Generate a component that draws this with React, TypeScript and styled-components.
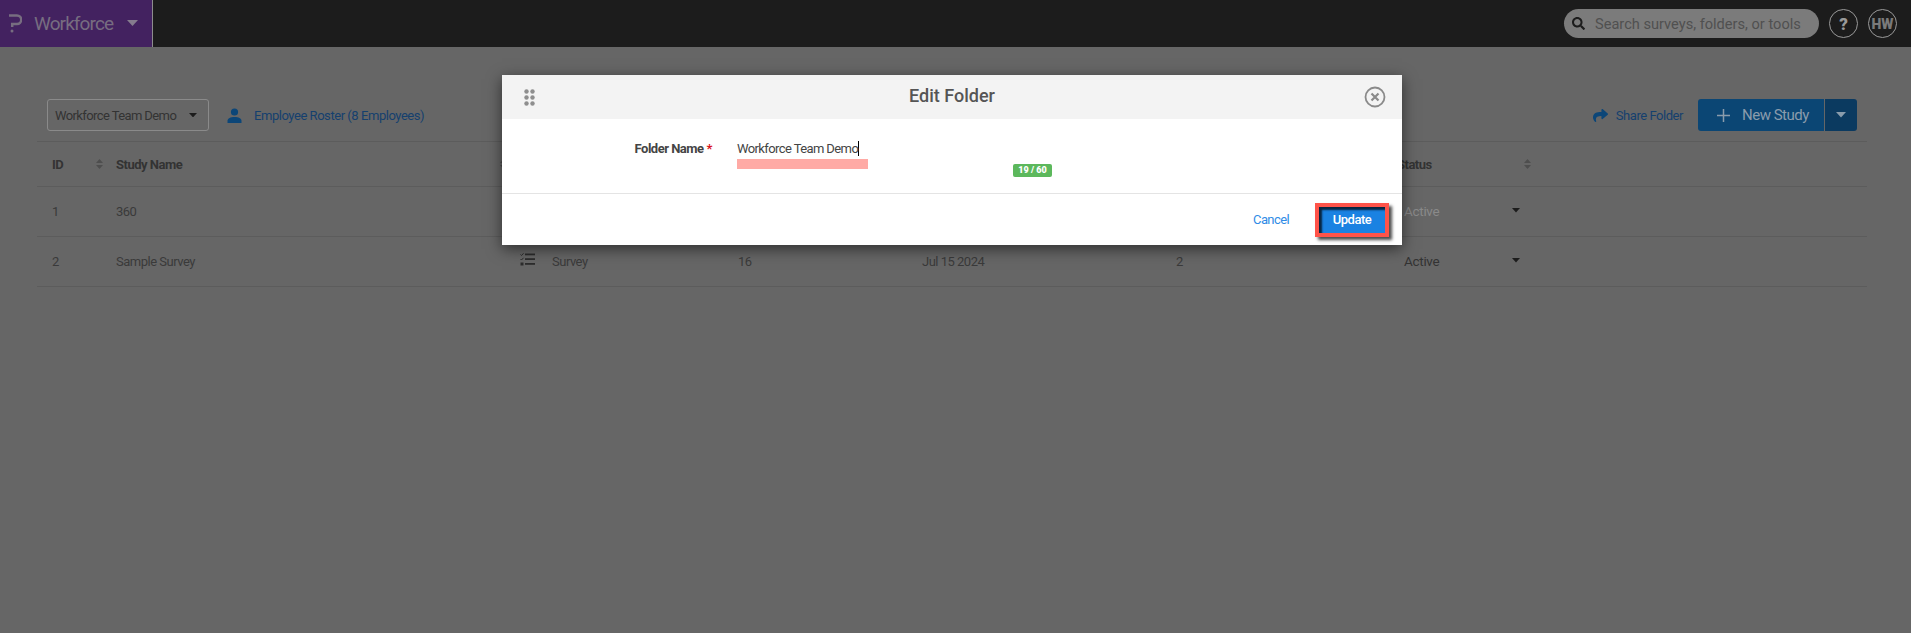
import React from 'react';
import styled, { createGlobalStyle } from 'styled-components';
import { FaSearch, FaShare } from 'react-icons/fa';

const FONT = `'Roboto', 'Liberation Sans', sans-serif`;

const GlobalStyle = createGlobalStyle`
  html, body {
    margin: 0;
    padding: 0;
    background: #666666;
    font-family: ${FONT};
  }
  * { box-sizing: border-box; }
`;

const Page = styled.div`
  position: relative;
  width: 1911px;
  height: 633px;
  overflow: hidden;
  background: #666666;
`;

const TopBar = styled.header`
  display: flex;
  align-items: center;
  height: 47px;
  background: #1c1c1c;
  padding-right: 14px;
`;

const Brand = styled.div`
  display: flex;
  align-items: center;
  width: 153px;
  height: 47px;
  padding-left: 9px;
  background: #432260;
  border-right: 1px solid #8d8d8d;
  color: #776d80;
  font-size: 19px;
  letter-spacing: -0.9px;
`;

const BrandName = styled.span`
  margin-left: 12px;
  margin-right: 14px;
`;

const Search = styled.div`
  display: flex;
  align-items: center;
  gap: 10px;
  width: 255px;
  height: 29px;
  margin-left: auto;
  padding-left: 8px;
  border-radius: 15px;
  background: #7b7b7b;
  color: #505050;
  font-size: 14.6px;
  svg { color: #1c1c1c; }
`;

const RoundButton = styled.div`
  display: flex;
  align-items: center;
  justify-content: center;
  width: 29px;
  height: 29px;
  margin-left: 10px;
  border: 1px solid #9a9a9a;
  border-radius: 50%;
  color: ${(p: { $dim?: boolean }) => (p.$dim ? '#7a7a7a' : '#999999')};
  font-size: ${(p: { $dim?: boolean }) => (p.$dim ? '14px' : '17px')};
  font-weight: 900;
`;

const Content = styled.main`
  padding: 52px 44px 0 37px;
`;

const Toolbar = styled.div`
  display: flex;
  align-items: center;
  height: 32px;
  margin-bottom: 10px;
  padding-left: 10px;
`;

const FolderSelect = styled.div`
  display: flex;
  align-items: center;
  justify-content: space-between;
  width: 162px;
  height: 32px;
  padding: 0 11px 0 7px;
  border: 1px solid #8a8a8a;
  border-radius: 3px;
  color: #333333;
  font-size: 13px;
  letter-spacing: -0.6px;
  white-space: nowrap;
`;

const ToolLink = styled.a`
  display: flex;
  align-items: center;
  color: #15406e;
  font-size: 13px;
  letter-spacing: -0.45px;
  margin-left: ${(p: { $push?: boolean }) => (p.$push ? 'auto' : '18px')};
`;

const LinkIcon = styled.span`
  display: flex;
  margin-right: ${(p: { $gap: number }) => p.$gap}px;
`;

const SplitButton = styled.div`
  display: flex;
  height: 32px;
  margin-left: 15px;
  margin-right: 10px;
  border-radius: 3px;
  overflow: hidden;
  color: #8a9cac;
`;

const MainAction = styled.div`
  display: flex;
  align-items: center;
  gap: 12px;
  width: 126px;
  padding-left: 19px;
  background: #0b4674;
  font-size: 15px;
  letter-spacing: -0.5px;
`;

const ActionCaret = styled.div`
  display: flex;
  align-items: center;
  justify-content: center;
  width: 32px;
  margin-left: 1px;
  background: #0b3a60;
`;

const COLUMNS = '64px 404px 218px 184px 254px 228px 1fr';

const HeadRow = styled.div`
  display: grid;
  grid-template-columns: ${COLUMNS};
  align-items: center;
  height: 46px;
  border-top: 1px solid #5c5c5c;
  border-bottom: 1px solid #5c5c5c;
  color: #333333;
  font-size: 13px;
  font-weight: 700;
  letter-spacing: -0.5px;
`;

const HeadCell = styled.div`
  display: flex;
  align-items: center;
  justify-content: space-between;
  padding-left: 15px;
  svg { margin-right: -2px; }
`;

// the status header sits 7px left of its cells
const StatusHead = styled(HeadCell)`
  width: 140px;
  padding-left: 8px;
`;

const Row = styled.div`
  display: grid;
  grid-template-columns: ${COLUMNS};
  align-items: center;
  height: 50px;
  border-bottom: 1px solid #5c5c5c;
  color: #3a3a3a;
  font-size: 13px;
  letter-spacing: -0.5px;
`;

const Cell = styled.div`
  display: flex;
  align-items: center;
  padding-left: 15px;
`;

const TypeIcon = styled.span`
  display: flex;
  margin-right: 17px;
  margin-top: -5px;
`;

const StatusCell = styled.div`
  display: flex;
  align-items: center;
  justify-content: space-between;
  width: 131px;
  padding-left: 15px;
  margin-top: -2px;
  color: ${(p: { $faded?: boolean }) => (p.$faded ? '#8a8a8a' : '#333333')};
  font-size: 13.5px;
  letter-spacing: -0.3px;
`;

const Modal = styled.section`
  position: absolute;
  top: 75px;
  left: 502px;
  width: 900px;
  height: 170px;
  background: #ffffff;
  box-shadow: 0 4px 14px rgba(0, 0, 0, 0.55);
`;

const ModalHeader = styled.div`
  display: flex;
  align-items: center;
  justify-content: space-between;
  height: 44px;
  padding: 0 16px 0 22px;
  background: #f3f3f3;
`;

const ModalTitle = styled.h2`
  margin: -4px 0 0 5px;
  color: #555555;
  font-size: 18px;
  font-weight: 500;
`;

const ModalBody = styled.div`
  display: grid;
  grid-template-columns: 235px 1fr;
  height: 75px;
  border-bottom: 1px solid #e4e4e4;
`;

const FieldLabel = styled.label`
  padding: 22px 25px 0 0;
  text-align: right;
  color: #444444;
  font-size: 13px;
  font-weight: 700;
  letter-spacing: -0.5px;
  line-height: 16px;
  em { color: #d9141e; font-style: normal; margin-left: 3px; }
`;

const Field = styled.div`
  position: relative;
  padding: 22px 0 0 0;
`;

const FieldValue = styled.div`
  color: #444444;
  font-size: 13px;
  letter-spacing: -0.6px;
  line-height: 16px;
  span { border-right: 1px solid #000000; }
`;

const Highlight = styled.div`
  width: 131px;
  height: 10px;
  margin-top: 2px;
  background: #ffaaa5;
`;

const Counter = styled.span`
  position: absolute;
  left: 276px;
  top: 45px;
  width: 39px;
  height: 13px;
  border-radius: 2px;
  background: #5cb85c;
  color: #ffffff;
  font-size: 9px;
  font-weight: 900;
  line-height: 13px;
  text-align: center;
`;

const ModalFooter = styled.div`
  display: flex;
  align-items: center;
  justify-content: flex-end;
  height: 51px;
  padding-right: 13px;
`;

const CancelLink = styled.a`
  color: #2f8ce6;
  font-size: 13px;
  letter-spacing: -0.6px;
  margin-right: 26px;
`;

const UpdateButton = styled.button`
  width: 74px;
  height: 34px;
  padding: 0;
  border: 4px solid #ff5349;
  background: #1a82e2;
  box-shadow: inset 3px 3px 2px #08243f, 3px 3px 3px rgba(0, 0, 0, 0.7);
  color: #ffffff;
  font-family: ${FONT};
  font-size: 13px;
  font-weight: 500;
  letter-spacing: -0.5px;
`;

const Caret = ({ color = '#1c1c1c', w = 8 }: { color?: string; w?: number }) => (
  <svg width={w} height={w * 0.55} viewBox="0 0 10 5.5">
    <path d="M0 0h10L5 5.5z" fill={color} />
  </svg>
);

const SortIcon = () => (
  <svg width="7" height="10" viewBox="0 0 7 10">
    <path d="M3.500 0L7 4H0zM3.500 10L0 6h7z" fill="#4e4e4e" />
  </svg>
);

const App = () => (
  <Page>
    <GlobalStyle />
    <TopBar>
      <Brand>
        <svg width="13" height="19" viewBox="0 0 13 19" fill="none">
          <path d="M0 1.500h8a3.800 3.800 0 0 1 0 8.500H3.200v3" stroke="#776d80" strokeWidth="2.500" />
          <circle cx="3" cy="17" r="1.500" fill="#776d80" />
        </svg>
        <BrandName>Workforce</BrandName>
        <Caret color="#857c8e" w={11} />
      </Brand>
      <Search>
        <FaSearch size={13} />
        Search surveys, folders, or tools
      </Search>
      <RoundButton>?</RoundButton>
      <RoundButton $dim>HW</RoundButton>
    </TopBar>
    <Content>
      <Toolbar>
        <FolderSelect>
          Workforce Team Demo
          <Caret />
        </FolderSelect>
        <ToolLink>
          <LinkIcon $gap={12}>
            <svg width="15" height="15" viewBox="0 0 15 15">
              <circle cx="7.500" cy="4" r="3.600" fill="#0c4678" />
              <path d="M0.500 15v-2.200c0-2.400 3-3.800 7-3.800s7 1.400 7 3.800V15z" fill="#0c4678" />
            </svg>
          </LinkIcon>
          Employee Roster (8 Employees)
        </ToolLink>
        <ToolLink $push>
          <LinkIcon $gap={8}>
            <FaShare size={15} color="#0c4678" />
          </LinkIcon>
          Share Folder
        </ToolLink>
        <SplitButton>
          <MainAction>
            <svg width="13" height="13" viewBox="0 0 13 13">
              <path d="M6.500 0v13M0 6.500h13" stroke="#8a9cac" strokeWidth="1.500" />
            </svg>
            New Study
          </MainAction>
          <ActionCaret>
            <Caret color="#8a9cac" w={10} />
          </ActionCaret>
        </SplitButton>
      </Toolbar>
      <HeadRow>
        <HeadCell>ID<SortIcon /></HeadCell>
        <HeadCell>Study Name<SortIcon /></HeadCell>
        <HeadCell />
        <HeadCell />
        <HeadCell />
        <HeadCell />
        <StatusHead>Status<SortIcon /></StatusHead>
      </HeadRow>
      <Row>
        <Cell>1</Cell>
        <Cell>360</Cell>
        <Cell />
        <Cell />
        <Cell />
        <Cell />
        <StatusCell $faded>Active<Caret /></StatusCell>
      </Row>
      <Row>
        <Cell>2</Cell>
        <Cell>Sample Survey</Cell>
        <Cell>
          <TypeIcon>
            <svg width="15" height="13" viewBox="0 0 15 13" fill="#2c2c2c">
              <path d="M0.500 1.500L1.500 2.500 3.500 0.300M0.500 6L1.500 7 3.500 4.800" stroke="#2c2c2c" fill="none" />
              <rect x="5" y="0.500" width="10" height="1.800" />
              <rect x="5" y="5.200" width="10" height="1.800" />
              <rect x="5" y="10" width="10" height="1.800" />
              <rect x="0.500" y="9.500" width="3" height="3" />
            </svg>
          </TypeIcon>
          Survey
        </Cell>
        <Cell>16</Cell>
        <Cell>Jul 15 2024</Cell>
        <Cell>2</Cell>
        <StatusCell>Active<Caret /></StatusCell>
      </Row>
    </Content>
    <Modal>
      <ModalHeader>
        <svg width="11" height="17" viewBox="0 0 11 17" fill="#8e8e8e">
          <circle cx="2.500" cy="2.500" r="2.200" />
          <circle cx="8.500" cy="2.500" r="2.200" />
          <circle cx="2.500" cy="8.500" r="2.200" />
          <circle cx="8.500" cy="8.500" r="2.200" />
          <circle cx="2.500" cy="14.500" r="2.200" />
          <circle cx="8.500" cy="14.500" r="2.200" />
        </svg>
        <ModalTitle>Edit Folder</ModalTitle>
        <svg width="22" height="22" viewBox="0 0 22 22" fill="none" stroke="#8a8a8a">
          <circle cx="11" cy="11" r="9.500" strokeWidth="1.800" />
          <path d="M7.500 7.500l7 7M14.500 7.500l-7 7" strokeWidth="2.200" />
        </svg>
      </ModalHeader>
      <ModalBody>
        <FieldLabel>
          Folder Name<em>*</em>
        </FieldLabel>
        <Field>
          <FieldValue>
            <span>Workforce Team Demo</span>
          </FieldValue>
          <Highlight />
          <Counter>19 / 60</Counter>
        </Field>
      </ModalBody>
      <ModalFooter>
        <CancelLink>Cancel</CancelLink>
        <UpdateButton>Update</UpdateButton>
      </ModalFooter>
    </Modal>
  </Page>
);

export default App;
